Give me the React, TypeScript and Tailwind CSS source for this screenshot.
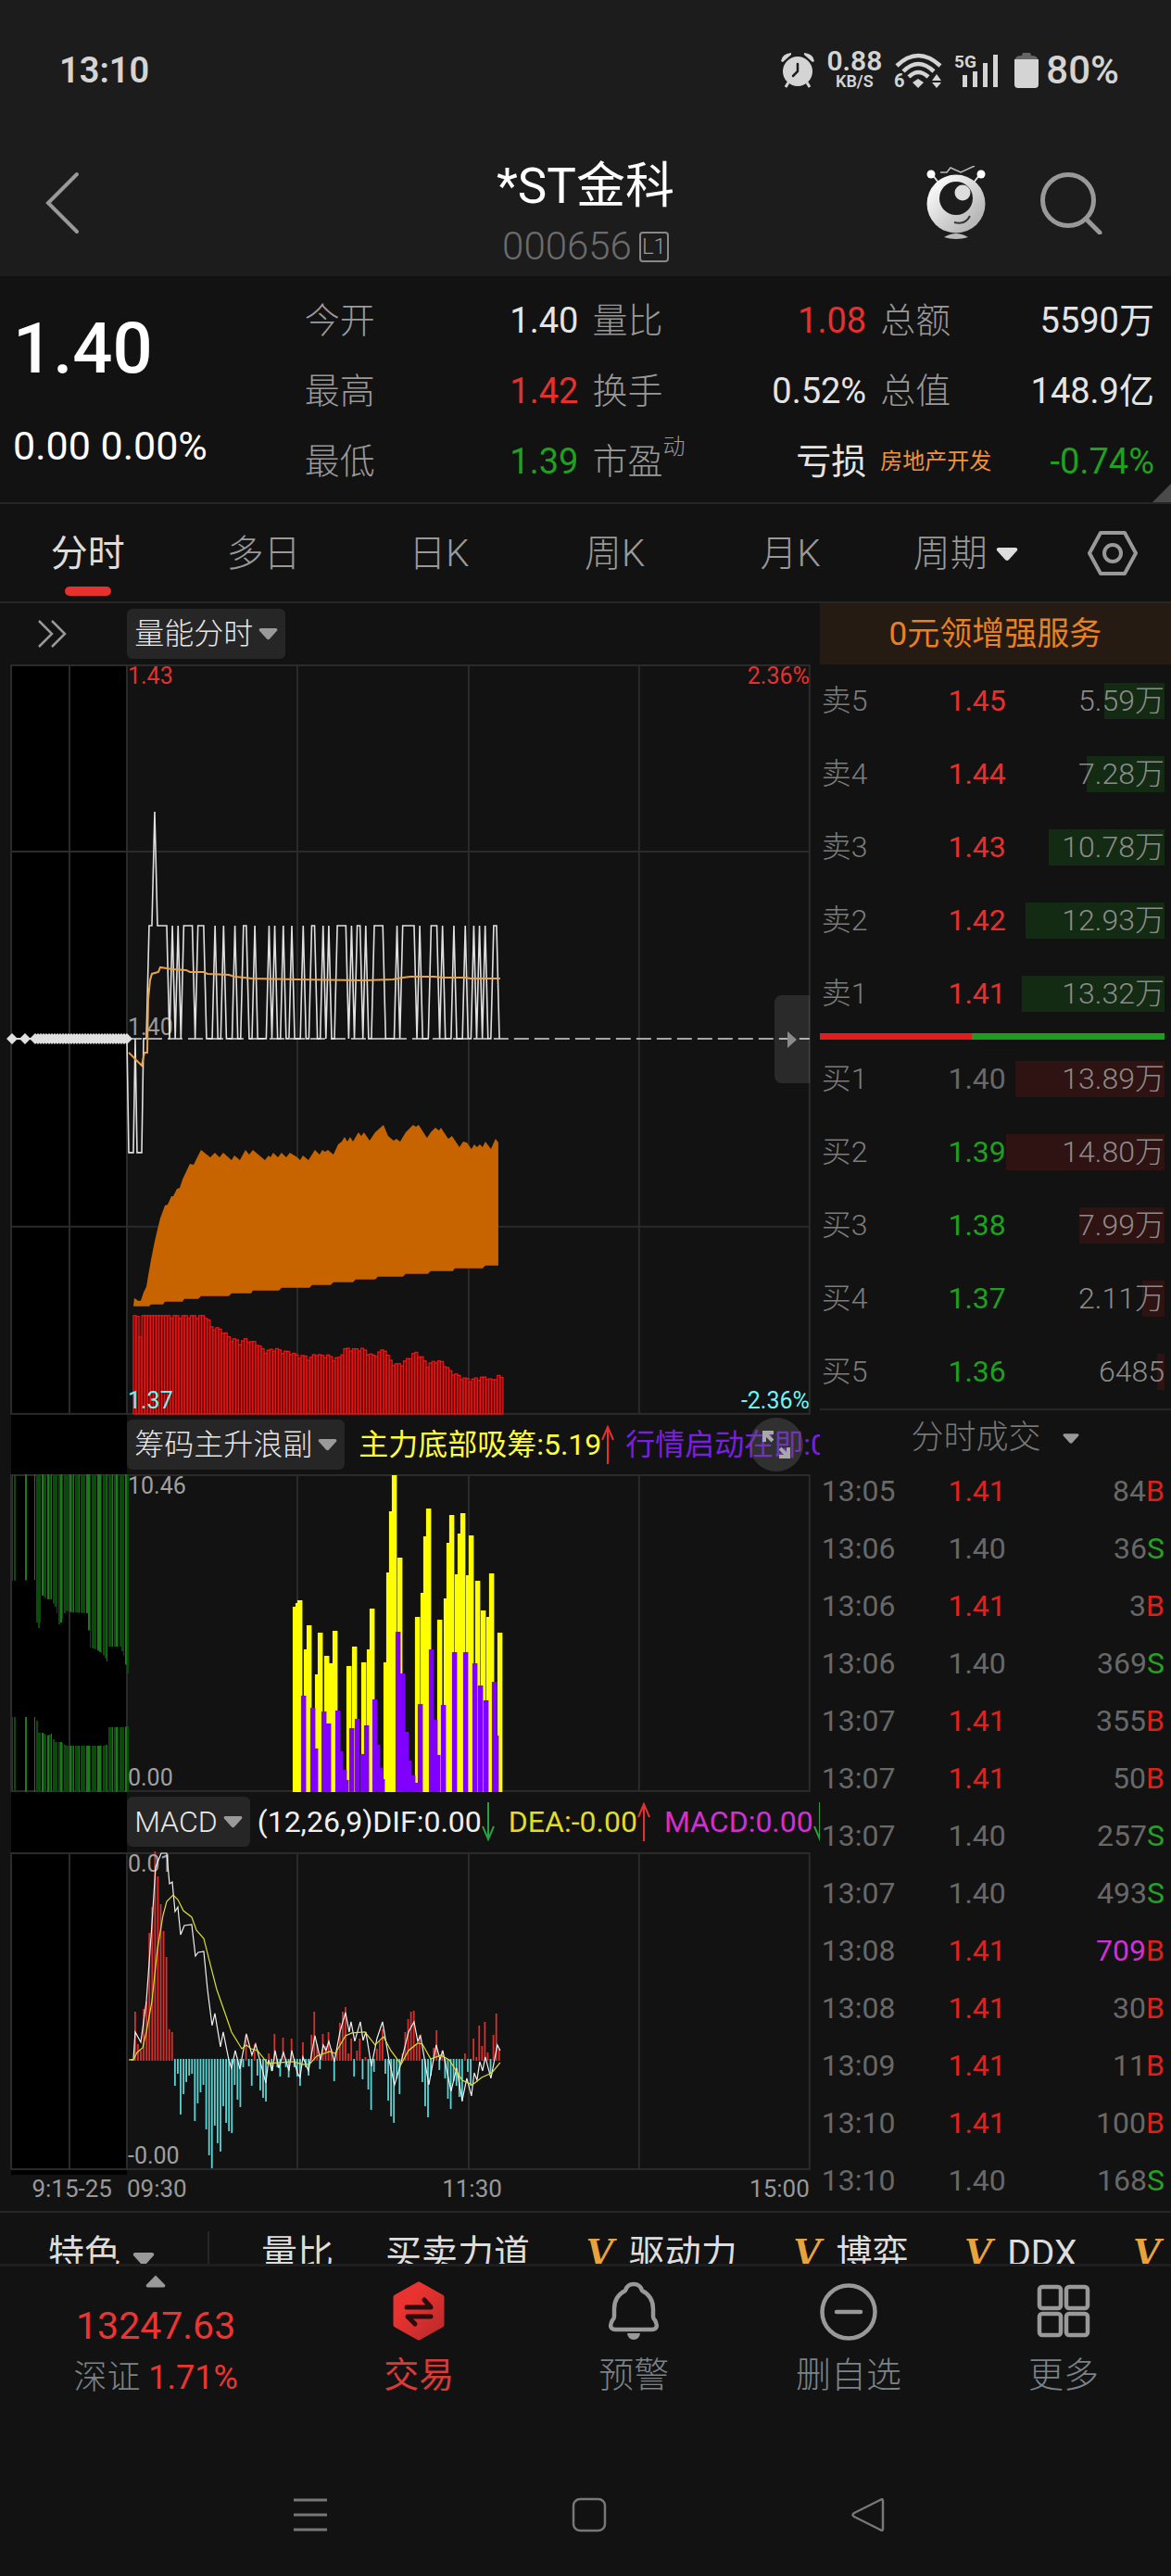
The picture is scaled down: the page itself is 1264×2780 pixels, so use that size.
import React from 'react'
import clsx from 'clsx'

type Tone = 'red' | 'green' | 'gray' | 'white'

const toneClass: Record<Tone, string> = {
  red: 'text-[#e5302d]',
  green: 'text-[#1fa01f]',
  gray: 'text-[#686868]',
  white: 'text-[#e4e4e4]',
}

/* ---------- quote data ---------- */

const stats: { label: string; value: string; tone: Tone; sup?: string; sector?: boolean }[] = [
  { label: '今开', value: '1.40', tone: 'white' },
  { label: '量比', value: '1.08', tone: 'red' },
  { label: '总额', value: '5590万', tone: 'white' },
  { label: '最高', value: '1.42', tone: 'red' },
  { label: '换手', value: '0.52%', tone: 'white' },
  { label: '总值', value: '148.9亿', tone: 'white' },
  { label: '最低', value: '1.39', tone: 'green' },
  { label: '市盈', value: '亏损', tone: 'white', sup: '动' },
  { label: '房地产开发', value: '-0.74%', tone: 'green', sector: true },
]

const tabs = ['分时', '多日', '日K', '周K', '月K']

type Order = { label: string; price: string; volume: string; tone: Tone; amount: number }

const sells: Order[] = [
  { label: '卖5', price: '1.45', volume: '5.59万', tone: 'red', amount: 5.59 },
  { label: '卖4', price: '1.44', volume: '7.28万', tone: 'red', amount: 7.28 },
  { label: '卖3', price: '1.43', volume: '10.78万', tone: 'red', amount: 10.78 },
  { label: '卖2', price: '1.42', volume: '12.93万', tone: 'red', amount: 12.93 },
  { label: '卖1', price: '1.41', volume: '13.32万', tone: 'red', amount: 13.32 },
]

const buys: Order[] = [
  { label: '买1', price: '1.40', volume: '13.89万', tone: 'gray', amount: 13.89 },
  { label: '买2', price: '1.39', volume: '14.80万', tone: 'green', amount: 14.8 },
  { label: '买3', price: '1.38', volume: '7.99万', tone: 'green', amount: 7.99 },
  { label: '买4', price: '1.37', volume: '2.11万', tone: 'green', amount: 2.11 },
  { label: '买5', price: '1.36', volume: '6485', tone: 'green', amount: 0.65 },
]

const trades: [string, string, string, 'B' | 'S'][] = [
  ['13:05', '1.41', '84', 'B'],
  ['13:06', '1.40', '36', 'S'],
  ['13:06', '1.41', '3', 'B'],
  ['13:06', '1.40', '369', 'S'],
  ['13:07', '1.41', '355', 'B'],
  ['13:07', '1.41', '50', 'B'],
  ['13:07', '1.40', '257', 'S'],
  ['13:07', '1.40', '493', 'S'],
  ['13:08', '1.41', '709', 'B'],
  ['13:08', '1.41', '30', 'B'],
  ['13:09', '1.41', '11', 'B'],
  ['13:10', '1.41', '100', 'B'],
  ['13:10', '1.40', '168', 'S'],
]

/* ---------- chart data ---------- */

const LEFT = 137
const MINUTE = 3.07

// minutes during which the price sits one tick above the previous close
const upperTicks: [number, number][] = [
  [16, 16], [18, 18], [20, 23], [25, 27], [31, 31], [34, 34], [38, 38], [41, 42], [45, 45], [50, 50],
  [52, 52], [55, 55], [58, 58], [62, 62], [65, 66], [69, 69], [71, 71], [74, 77], [79, 79], [81, 82],
  [84, 84], [87, 90], [95, 95], [97, 101], [103, 103], [107, 109], [111, 111], [115, 115], [119, 119],
  [122, 122], [124, 124], [126, 126], [129, 130],
]

const priceLine =
  '137,404 139,527 144,527 146,404 148,527 153,527 155,404 158,404 161,282 164,282 167,159 170,282 180,282 183,404 ' +
  upperTicks
    .map(([from, to]) => {
      const x = (m: number) => LEFT + m * MINUTE
      return `${x(from - 1)},404 ${x(from)},282 ${x(to)},282 ${x(to + 1)},404`
    })
    .join(' ')

const averageLine =
  '139,419 153,433 156,419 159,419 160,362 162,341 164,334 171,332 173,327 180,328 186,329 201,330 205,332 220,332 224,334 247,335 253,337 272,339 320,340 393,341 424,340 435,338 443,337 469,337 477,338 502,338 508,339 540,339'

const energyArea =
  '144,693 145,684 149,687 152,687 155,678 158,672 160,660 163,643 167,623 170,610 173,598 178,584 181,583 185,574 187,574 191,566 194,565 197,556 205,539 209,540 217,524 227,532 232,527 237,532 241,527 250,535 253,530 259,535 265,524 269,529 273,524 286,535 290,530 292,532 295,527 300,532 304,527 309,532 313,527 321,532 324,535 327,530 333,535 340,524 345,529 348,524 351,526 354,524 360,529 365,518 369,515 372,510 375,515 378,510 381,515 387,505 390,509 393,505 399,514 405,505 414,497 419,509 425,514 428,512 432,515 438,505 446,497 449,499 452,497 461,511 465,505 470,500 474,503 476,500 484,512 488,509 496,521 500,515 504,516 509,523 512,518 515,521 518,518 521,521 524,515 530,523 535,512 538,516 ' +
  '538,649 524,649 521,652 491,652 489,655 465,655 462,658 438,658 435,661 408,661 405,664 384,664 381,667 360,667 357,670 337,670 334,673 304,673 301,676 273,676 271,679 250,679 247,682 217,682 214,685 199,685 197,688 178,688 176,691 163,691 161,693'

const volumeTops: [number, number][] = [
  [144, 703], [147, 703], [148, 715], [150, 726], [152, 726], [153, 703], [222, 703], [224, 708], [226, 715],
  [233, 716], [241, 720], [247, 728], [253, 728], [258, 732], [265, 727], [269, 731], [275, 731], [281, 738],
  [286, 741], [296, 738], [303, 741], [313, 742], [320, 746], [327, 746], [333, 749], [340, 743], [345, 746],
  [352, 745], [359, 749], [365, 748], [370, 739], [375, 738], [382, 739], [389, 738], [394, 741], [401, 746],
  [407, 743], [414, 738], [419, 750], [425, 755], [432, 755], [438, 750], [447, 742], [453, 746], [460, 756],
  [469, 751], [477, 753], [484, 762], [491, 766], [499, 770], [508, 772], [513, 770], [525, 769], [530, 773],
  [536, 767], [542, 771],
]

const mainForce: [number, number][] = [
  [316, 200], [319, 204], [321, 207], [328, 154], [331, 180], [340, 127], [343, 172], [350, 147], [355, 139],
  [359, 174], [374, 136], [380, 157], [390, 140], [396, 154], [399, 198], [414, 140], [417, 237], [420, 303],
  [423, 342], [429, 253], [448, 189], [454, 215], [457, 276], [460, 306], [472, 186], [479, 209], [482, 269],
  [485, 299], [491, 235], [494, 279], [497, 301], [503, 234], [506, 277], [513, 228], [519, 196], [525, 189],
  [528, 236], [537, 172],
]

const startSignal: [number, number][] = [
  [325, 104], [335, 91], [338, 47], [347, 87], [352, 74], [362, 88], [365, 44], [369, 24], [371, 13], [377, 69],
  [383, 79], [389, 41], [393, 72], [402, 100], [405, 51], [408, 26], [410, 14], [427, 173], [432, 128],
  [436, 65], [439, 34], [443, 18], [446, 10], [451, 95], [463, 154], [467, 78], [470, 40], [476, 94],
  [488, 151], [500, 151], [510, 139], [516, 115], [522, 99], [531, 119], [533, 61],
]

// pre-market chips: [x, end of the upper bar, start of the lower bar]
const preMarket: [number, number, number][] = [
  [13, 115, 262], [38, 114, 262], [39, 160, 266], [40, 169, 279], [43, 160, 279], [45, 131, 279], [50, 135, 282],
  [55, 135, 280], [58, 142, 289], [60, 144, 289], [63, 162, 289], [66, 159, 289], [70, 147, 293], [76, 149, 293],
  [94, 150, 293], [96, 187, 293], [103, 189, 293], [110, 194, 293], [115, 202, 292], [117, 186, 273],
  [129, 186, 273], [133, 196, 273], [137, 215, 272],
]

const macd = [
  52, 17, 10, 55, 63, 137, 165, 225, 198, 168, 139, 111, 33, 30, -28, -15, -59, -37, -24, -17, -15, -66, -47, -35,
  -27, -75, -103, -117, -71, -90, -99, -50, -68, -77, -79, -27, -43, -51, -8, 27, -7, -28, 17, -17, -33, -41, -45,
  7, -12, 28, -8, -18, 24, -8, -19, 23, -8, -18, -28, 19, -8, -17, 27, 52, 17, -10, 28, 15, 30, 12, -23, 10, 40,
  52, 57, 7, 23, -18, 10, 23, -21, 3, -32, -54, -13, 12, 20, 33, -15, -44, -61, -68, -20, -37, 7, 30, 44, 52, 53,
  17, 27, -24, -50, -62, -17, 13, 32, -11, 10, -20, -42, -53, -23, -28, -40, -45, 7, -13, -28, 23, 3, 37, 15, 41,
  8, -15, 27, 50, 12,
]

const difLine =
  '141,224 144,224 146,194 152,205 158,161 164,78 168,16 174,1 180,1 183,34 186,32 189,64 192,59 195,89 199,79 207,78 211,112 214,108 220,107 224,148 229,187 232,174 238,210 241,194 247,224 250,233 254,214 259,234 266,196 272,219 276,207 287,249 290,224 294,236 297,214 301,233 306,216 312,236 315,214 321,238 324,243 327,221 333,236 340,198 346,224 349,208 352,214 355,204 361,226 367,194 373,173 377,194 379,183 383,204 389,183 392,203 395,194 401,231 407,201 413,183 420,224 426,251 432,231 441,194 447,183 451,204 454,198 463,251 471,208 475,224 478,214 487,258 493,233 499,268 504,244 509,263 512,238 515,246 518,226 521,236 524,221 530,244 537,208 540,214'

const deaLine =
  '139,224 144,224 148,216 154,211 158,194 164,161 170,104 176,68 180,53 187,46 192,51 198,63 207,70 212,84 220,93 227,121 234,148 241,168 250,194 261,212 266,208 271,212 278,214 289,228 316,226 327,229 334,229 342,220 356,215 362,217 373,198 380,195 394,194 405,208 414,199 422,214 433,229 441,214 451,206 456,207 465,223 476,219 485,224 499,246 510,251 520,243 531,238 540,227'

const interpolate = (points: number[][], x: number, col = 1) => {
  for (let i = 1; i < points.length; i++) {
    if (x <= points[i][0]) {
      const a = points[i - 1]
      const b = points[i]
      return a[col] + ((b[col] - a[col]) * (x - a[0])) / (b[0] - a[0])
    }
  }
  return points[points.length - 1][col]
}

/* ---------- small pieces ---------- */

function Caret({ className, up = false }: { className?: string; up?: boolean }) {
  return (
    <svg viewBox="0 0 24 14" className={clsx('shrink-0', className)} fill="currentColor" aria-hidden="true">
      <path d={up ? 'M12 0 L23 11 Q24 14 21 14 L3 14 Q0 14 1 11 Z' : 'M3 0 L21 0 Q24 0 23 3 L14 13 Q12 15 10 13 L1 3 Q0 0 3 0 Z'} />
    </svg>
  )
}

function Trend({ up = false }: { up?: boolean }) {
  return (
    <svg
      viewBox="0 0 14 42"
      className={clsx('h-[42px] w-[14px] shrink-0', up ? 'text-[#e5302d]' : 'text-[#25a045]')}
      fill="none"
      stroke="currentColor"
      strokeWidth="2"
      aria-hidden="true"
    >
      <path d={up ? 'M7 42V2M1 16L7 2L13 16' : 'M7 0V40M1 26L7 40L13 26'} />
    </svg>
  )
}

function IndicatorButton({ children }: { children: React.ReactNode }) {
  return (
    <button className="flex h-[54px] shrink-0 items-center gap-[6px] rounded-md bg-[#262626] px-2 text-[32px] font-light text-[#e8e8e8]">
      {children}
      <Caret className="h-[14px] w-[21px] text-[#9a9a9a]" />
    </button>
  )
}

function GridLines({ height, rows = [] }: { height: number; rows?: number[] }) {
  return (
    <g stroke="#2b2b2b" strokeWidth="2" fill="none">
      <rect x="12" y="1" width="862" height={height - 2} />
      {[75, 137, 321, 506, 690].map((x) => (
        <line key={x} x1={x} x2={x} y1="0" y2={height} />
      ))}
      {rows.map((y) => (
        <line key={y} x1="12" x2="874" y1={y} y2={y} />
      ))}
    </g>
  )
}

/* ---------- charts ---------- */

function PriceChart() {
  const volumes = Array.from({ length: 130 }, (_, i) => 144 + i * MINUTE)
  const diamonds = [13, 27, ...Array.from({ length: 34 }, (_, i) => 38 + i * 3)]

  return (
    <svg viewBox="0 0 885 810" className="block h-auto w-full overflow-visible text-[25px]" role="img" aria-label="量能分时">
      <rect x="12" y="0" width="125" height="810" fill="#000" />
      <GridLines height={810} rows={[202, 607]} />
      {volumes.map((x, i) => {
        const top = interpolate(volumeTops, x) + (i % 3 === 1 && x > 180 ? 3 : 0)
        return <rect key={i} x={x} y={top} width="3" height={809 - top} fill="#6d0000" stroke="#e81818" strokeWidth="1.3" />
      })}
      <polygon points={energyArea} fill="#c86400" />
      <line x1="137" x2="874" y1="404" y2="404" stroke="#d8d8d8" strokeWidth="1.5" strokeDasharray="16 6" />
      <line x1="8" x2="137" y1="404" y2="404" stroke="#e0e0e0" strokeWidth="2" />
      {diamonds.map((x) => (
        <path key={x} d={`M${x - 6} 404L${x} 398L${x + 6} 404L${x} 410Z`} fill="#e0e0e0" />
      ))}
      <text x="138" y="400" fill="#9a9a9a">1.40</text>
      <polyline points={priceLine} fill="none" stroke="#e0e0e0" strokeWidth="1.6" />
      <polyline points={averageLine} fill="none" stroke="#e8a24a" strokeWidth="2" />
      <text x="138" y="21" fill="#e5302d">1.43</text>
      <text x="874" y="21" fill="#e5302d" textAnchor="end">2.36%</text>
      <text x="138" y="803" fill="#6ff5f5">1.37</text>
      <text x="874" y="803" fill="#6ff5f5" textAnchor="end">-2.36%</text>
    </svg>
  )
}

function ForceChart() {
  const chips = [13, 15, 27, 37, ...Array.from({ length: 50 }, (_, i) => 39 + i * 2)]

  return (
    <svg viewBox="0 0 885 343" className="block h-auto w-full overflow-visible text-[25px]" role="img" aria-label="筹码主升浪副">
      <rect x="12" y="0" width="125" height="343" fill="#000" />
      <GridLines height={343} />
      {chips.map((x, i) => {
        const top = interpolate(preMarket, x, 1)
        const bottom = interpolate(preMarket, x, 2)
        const fill = i % 5 === 2 || i % 7 === 3 ? '#1c7a1c' : '#064f06'
        return (
          <g key={x} fill={fill}>
            <rect x={x} y="0" width={i % 3 === 0 ? 1 : 2} height={top} />
            <rect x={x} y={bottom} width={i % 3 === 0 ? 1 : 2} height={343 - bottom} />
          </g>
        )
      })}
      {mainForce.map(([x, h]) => (
        <rect key={x} x={x} y={343 - h} width="5.5" height={h} fill="#ffff00" />
      ))}
      {startSignal.map(([x, h]) => (
        <rect key={x} x={x} y={343 - h} width="5.5" height={h} fill="#7f00ff" />
      ))}
      <text x="138" y="21" fill="#a0a0a0">10.46</text>
      <text x="138" y="336" fill="#a0a0a0">0.00</text>
    </svg>
  )
}

function MacdChart() {
  return (
    <svg viewBox="0 0 885 348" className="block h-auto w-full overflow-visible text-[25px]" role="img" aria-label="MACD">
      <rect x="12" y="0" width="125" height="348" fill="#000" />
      <GridLines height={343} />
      {macd.map((v, i) => (
        <rect
          key={i}
          x={145 + i * MINUTE}
          y={v > 0 ? 224 - v : 223}
          width="1.8"
          height={Math.abs(v) + 1}
          fill={v > 0 ? '#d8302c' : '#5ad5d5'}
        />
      ))}
      <text x="138" y="21" fill="#a0a0a0">0.01</text>
      <text x="138" y="336" fill="#a0a0a0">-0.00</text>
      <polyline points={difLine} fill="none" stroke="#f0f0f0" strokeWidth="1.2" />
      <polyline points={deaLine} fill="none" stroke="#dede30" strokeWidth="1.2" />
    </svg>
  )
}

/* ---------- sections ---------- */

function StatusBar() {
  return (
    <div className="flex h-[152px] items-center justify-between pl-16 pr-14 text-[#d4d4d4]">
      <span className="text-[38px] font-semibold">13:10</span>
      <div className="flex items-center gap-[13px]">
        <svg viewBox="0 0 36 38" className="h-[38px] w-[36px]" fill="currentColor" aria-hidden="true">
          <circle cx="18" cy="20" r="16" />
          <path d="M0 9Q1 1 11 0L11 2L2 10ZM36 9Q35 1 25 0L25 2L34 10Z" />
          <path d="M8 32L5 37M28 32L31 37" stroke="currentColor" strokeWidth="3" />
          <path d="M18 12V20L13 25" stroke="#1c1c1c" strokeWidth="2.5" fill="none" strokeLinecap="round" />
        </svg>
        <div className="flex flex-col items-center font-semibold">
          <span className="text-[30px] leading-[24px]">0.88</span>
          <span className="text-[18px] leading-[20px]">KB/S</span>
        </div>
        <svg viewBox="0 0 52 38" className="h-[38px] w-[52px] overflow-visible" fill="none" stroke="currentColor" strokeWidth="4.5" aria-hidden="true">
          <path d="M3 14Q26 -8 50 14M10 20Q26 4 43 20M16 26Q26 16 37 26" />
          <path d="M26 28L32 32L26 38L20 32Z" fill="currentColor" stroke="none" />
          <path d="M41 30L46 23L51 30ZM41 32L46 38L51 32Z" fill="currentColor" stroke="none" />
          <text x="0" y="37" fontSize="20" fontWeight="700" fill="currentColor" stroke="none">6</text>
        </svg>
        <svg viewBox="0 0 48 38" className="h-[38px] w-[48px] overflow-visible" fill="currentColor" aria-hidden="true">
          <text x="0" y="16" fontSize="19" fontWeight="700">5G</text>
          <path d="M9 24h5v13h-5zM20 20h5v17h-5zM31 11h5v26h-5zM42 2h5v35h-5z" />
        </svg>
        <div className="flex items-center gap-2 pl-1">
          <svg viewBox="0 0 26 38" className="h-[38px] w-[26px]" aria-hidden="true">
            <path d="M1 7Q1 3 8 3L9 0H17L18 3Q25 3 25 7Z" fill="#666" />
            <path d="M0 7H26V34Q26 38 22 38H4Q0 38 0 34Z" fill="currentColor" />
          </svg>
          <span className="text-[42px] font-medium leading-[50px]">80%</span>
        </div>
      </div>
    </div>
  )
}

function TitleBar() {
  return (
    <div className="grid h-[146px] grid-cols-[1fr_auto_1fr]">
      <div className="flex items-center pb-3 pl-12">
        <button aria-label="返回">
          <svg viewBox="0 0 38 68" className="h-[68px] w-[38px]" fill="none" stroke="#999" strokeWidth="4" strokeLinecap="round" aria-hidden="true">
            <path d="M35 3L4 34L35 65" />
          </svg>
        </button>
      </div>
      <div className="pt-4 text-center">
        <h1 className="text-[53px] font-normal leading-[66px] text-white">*ST金科</h1>
        <div className="mt-1 flex items-center justify-center gap-2 text-[42px] font-light leading-[56px] text-[#6c6c6c]">
          000656
          <span className="w-8 rounded-sm border-2 border-[#888] text-center text-[24px] leading-[29px] text-[#999]">L1</span>
        </div>
      </div>
      <div className="flex items-center justify-end gap-[59px] pb-3 pr-[73px]">
        <button aria-label="智能助手">
          <svg viewBox="0 0 64 80" className="h-[80px] w-[64px]" aria-hidden="true">
            <defs>
              <linearGradient id="bot" x1="0" y1="0" x2="1" y2="1">
                <stop offset="0.2" stopColor="#f4f4f4" />
                <stop offset="0.8" stopColor="#b8b8b8" />
              </linearGradient>
            </defs>
            <path d="M6 9L13 18M58 9L51 18" stroke="#ddd" strokeWidth="2" />
            <circle cx="5" cy="9" r="4.5" fill="#fff" />
            <circle cx="59" cy="9" r="4.5" fill="#fff" />
            <path d="M15 7H22L26 2L37 7L52 0" fill="none" stroke="#bbb" strokeWidth="1.5" />
            <circle cx="32" cy="41" r="31.5" fill="url(#bot)" />
            <circle cx="32" cy="35" r="18" fill="#1c1c1c" />
            <circle cx="39" cy="29" r="8.5" fill="#ddd" />
            <path d="M30 61Q42 64 47 54" fill="none" stroke="#333" strokeWidth="2" />
            <path d="M19 77Q32 69 45 77Q32 81 19 77Z" fill="#bbb" />
          </svg>
        </button>
        <button aria-label="搜索">
          <svg viewBox="0 0 68 68" className="h-[68px] w-[68px]" fill="none" stroke="#999" strokeWidth="5" aria-hidden="true">
            <circle cx="30" cy="31" r="27.5" />
            <path d="M49 51L64 66" strokeLinecap="round" />
          </svg>
        </button>
      </div>
    </div>
  )
}

function QuotePanel() {
  return (
    <section className="relative flex h-[246px] border-b-2 border-[#262626] pt-[10px]">
      <div className="w-[26%] shrink-0 pl-[14px] text-white">
        <div className="mt-[26px] text-[76px] font-medium leading-[84px]">1.40</div>
        <div className="mt-[38px] text-[43px] leading-[50px]">0.00 0.00%</div>
      </div>
      <dl className="grid flex-1 grid-cols-3 grid-rows-[76px_76px_76px] gap-x-[15px] pr-[18px]">
        {stats.map((s) => (
          <div key={s.label} className="flex items-center justify-between">
            {s.sector ? (
              <dt className="text-[24px] text-[#f0923c]">{s.label}</dt>
            ) : (
              <dt className="relative text-[38px] font-light text-[#999]">
                {s.label}
                {s.sup && <span className="absolute left-full top-0 text-[24px] leading-[24px]">{s.sup}</span>}
              </dt>
            )}
            <dd className={clsx('text-[38px]', toneClass[s.tone])}>{s.value}</dd>
          </div>
        ))}
      </dl>
      <svg viewBox="0 0 20 20" className="absolute bottom-0 right-0 h-5 w-5" aria-hidden="true">
        <path d="M20 0V20H0Z" fill="#4a4a4a" />
      </svg>
    </section>
  )
}

function PeriodTabs() {
  return (
    <nav className="grid h-[107px] grid-cols-[3fr_3fr_3fr_3fr_3fr_3fr_2fr] border-b-2 border-[#262626] text-[40px] text-[#999]">
      {tabs.map((tab, i) => (
        <button key={tab} className={clsx('relative pt-[3px]', i === 0 ? 'font-normal text-[#ddd]' : 'font-light')}>
          {tab}
          {i === 0 && <span className="absolute bottom-[6px] left-1/2 h-[10px] w-[50px] -translate-x-1/2 rounded-full bg-[#e8302c]" />}
        </button>
      ))}
      <button className="flex items-center justify-center gap-2 pt-[3px] font-light">
        周期
        <Caret className="h-[14px] w-[26px] text-[#ddd]" />
      </button>
      <button className="flex items-center justify-center" aria-label="设置">
        <svg viewBox="0 0 54 50" className="h-[50px] w-[54px]" fill="none" stroke="#999" strokeWidth="4" strokeLinejoin="round" aria-hidden="true">
          <path d="M14 3H40L52 25L40 47H14L2 25Z" />
          <circle cx="27" cy="25" r="9" />
        </svg>
      </button>
    </nav>
  )
}

function Charts() {
  return (
    <section className="min-w-0 flex-1">
      <div className="flex h-[66px] items-center">
        <div className="w-[15.5%] shrink-0 pl-10">
          <button className="flex" aria-label="展开">
            <svg viewBox="0 0 32 32" className="h-8 w-8" fill="none" stroke="#999" strokeWidth="2.5" aria-hidden="true">
              <path d="M2 2L16 16L2 30M16 2L30 16L16 30" />
            </svg>
          </button>
        </div>
        <IndicatorButton>量能分时</IndicatorButton>
      </div>
      <div className="relative">
        <PriceChart />
        <button
          className="absolute right-[11px] top-[357px] flex h-[95px] w-[38px] items-center justify-center rounded-l-lg bg-white/10"
          aria-label="收起盘口"
        >
          <svg viewBox="0 0 10 18" className="h-[18px] w-[10px]" fill="#8a8a8a" aria-hidden="true">
            <path d="M0 0L10 9L0 18Z" />
          </svg>
        </button>
      </div>

      <div className="relative flex h-[64px] items-center overflow-hidden whitespace-nowrap">
        <div className="h-full w-[15.5%] shrink-0 pl-3">
          <div className="h-full bg-black" />
        </div>
        <IndicatorButton>筹码主升浪副</IndicatorButton>
        <span className="ml-[15px] text-[32px] text-[#ffff3a]">主力底部吸筹:5.19</span>
        <Trend up />
        <span className="ml-3 text-[32px] text-[#7a1fe0]">行情启动在即:0.00</span>
        <button
          className="absolute right-[18px] top-[3px] flex h-[58px] w-[58px] items-center justify-center rounded-full bg-[#606060]/40"
          aria-label="放大"
        >
          <svg viewBox="0 0 32 32" className="h-8 w-8" fill="none" stroke="#a8a8a8" strokeWidth="4" aria-hidden="true">
            <path d="M13 3H3V13M3 3L12 12M19 29H29V19M29 29L20 20" />
          </svg>
        </button>
      </div>
      <ForceChart />

      <div className="flex h-[65px] items-center overflow-hidden whitespace-nowrap">
        <div className="h-full w-[15.5%] shrink-0 pl-3">
          <div className="h-full bg-black" />
        </div>
        <IndicatorButton>MACD</IndicatorButton>
        <span className="ml-2 text-[32px] text-[#f0f0f0]">(12,26,9)DIF:0.00</span>
        <Trend />
        <span className="ml-[15px] text-[32px] text-[#e0dc28]">DEA:-0.00</span>
        <Trend up />
        <span className="ml-[15px] text-[32px] text-[#d42fd4]">MACD:0.00</span>
        <Trend />
      </div>
      <MacdChart />
      <div className="grid h-[39px] grid-cols-[137fr_369fr_368fr_11fr] text-[26px] leading-[30px] text-[#999]">
        <span className="pr-4 text-right">9:15-25</span>
        <span className="flex justify-between">
          09:30
          <span className="-mr-9">11:30</span>
        </span>
        <span className="text-right">15:00</span>
      </div>
    </section>
  )
}

function OrderTable({ orders, side }: { orders: Order[]; side: 'sell' | 'buy' }) {
  return (
    <table className="w-full table-fixed text-[32px]">
      <tbody>
        {orders.map((o) => (
          <tr key={o.label} className="h-[79px]">
            <th scope="row" className="w-[27%] pb-[2px] pl-[2px] text-left font-light text-[#7c7c7c]">{o.label}</th>
            <td className={clsx('w-[27%] pb-[2px] text-right', toneClass[o.tone])}>{o.price}</td>
            <td className="relative w-[46%] pb-[2px] text-right font-light text-[#8c8c8c]">
              <div
                className={clsx('absolute right-0 top-5 h-[39px]', side === 'sell' ? 'bg-[#132a13]' : 'bg-[#2f1212]')}
                style={{ width: `${(o.amount / 14.8) * 100}%` }}
              />
              <span className="relative">{o.volume}</span>
            </td>
          </tr>
        ))}
      </tbody>
    </table>
  )
}

function OrderBook() {
  return (
    <aside className="w-[30%] shrink-0">
      <button className="block h-[66px] w-full bg-[#261b12] pt-[2px] text-[35px] text-[#e88024]">0元领增强服务</button>
      <div className="pr-[7px]">
        <OrderTable orders={sells} side="sell" />
        <div className="my-[3px] flex h-[7px]">
          <div className="w-[44%] bg-[#e21c1c]" />
          <div className="flex-1 bg-[#1f9c1f]" />
        </div>
        <OrderTable orders={buys} side="buy" />
      </div>
      <button className="flex h-[58px] w-full items-center justify-center gap-6 border-t-2 border-[#262626] pt-1 text-[35px] font-light text-[#777]">
        分时成交
        <Caret className="h-[11px] w-[18px] text-[#999]" />
      </button>
      <div className="pr-[7px]">
        <table className="w-full table-fixed text-[32px] text-[#686868]">
          <tbody>
            {trades.map(([time, price, volume, side], i) => (
              <tr key={i} className="h-[62px]">
                <td className="w-[27%] pl-[2px]">{time}</td>
                <td className={clsx('w-[27%] text-right', price === '1.41' ? 'text-[#e5201c]' : 'text-[#686868]')}>{price}</td>
                <td className="w-[46%] text-right">
                  <span className={clsx(volume === '709' && 'text-[#d42fd4]')}>{volume}</span>
                  <span className={side === 'B' ? 'text-[#d8221e]' : 'text-[#25a025]'}>{side}</span>
                </td>
              </tr>
            ))}
          </tbody>
        </table>
      </div>
    </aside>
  )
}

function FeatureStrip() {
  const vip = ['驱动力', '博弈', 'DDX', '']
  return (
    <section className="flex h-[57px] gap-[56px] overflow-hidden whitespace-nowrap border-t-2 border-[#262626] pl-[52px] text-[39px] leading-[88px] text-[#ddd]">
      <button className="flex shrink-0 gap-3">
        特色
        <Caret className="mt-[43px] h-[14px] w-[26px] text-[#999]" />
      </button>
      <div className="mt-5 h-10 w-0 shrink-0 border-l-2 border-[#262626]" />
      <a href="#liangbi" className="shrink-0">量比</a>
      <a href="#lidao" className="shrink-0">买卖力道</a>
      {vip.map((name) => (
        <a key={name} href="#vip" className="flex shrink-0 gap-4 pl-1">
          <span className="[font-family:'Liberation_Serif',serif] text-[46px] font-bold italic text-[#e8a33d]">V</span>
          {name}
        </a>
      ))}
    </section>
  )
}

function BottomBar() {
  const label = 'text-[38px] font-light leading-[50px] text-[#7b8388]'
  return (
    <footer>
      <div className="grid h-[161px] grid-cols-[29fr_20fr_20fr_20fr_20fr] border-t-[3px] border-[#1e1e1e]">
        <button className="flex flex-col items-center pt-[9px] text-[#ee3431]">
          <Caret up className="h-[14px] w-[22px] text-[#999]" />
          <span className="mt-[16px] text-[41px] leading-[50px]">13247.63</span>
          <span className="mt-[6px] text-[36px] leading-[50px]">
            <span className="font-light text-[#7b8388]">深证</span> 1.71%
          </span>
        </button>
        <button className="flex flex-col items-center gap-3 pt-4">
          <svg viewBox="0 0 58 64" className="h-[64px] w-[58px]" aria-hidden="true">
            <defs>
              <linearGradient id="hex" x1="0" y1="0" x2="1" y2="1">
                <stop offset="0.3" stopColor="#ea3330" />
                <stop offset="1" stopColor="#b82a2a" />
              </linearGradient>
            </defs>
            <path d="M29 3L54 17V47L29 61L4 47V17Z" fill="url(#hex)" stroke="url(#hex)" strokeWidth="5" strokeLinejoin="round" />
            <path d="M16 28H42L35 20M42 38H17L25 46" fill="none" stroke="#2a0c0c" strokeWidth="5" strokeLinecap="round" strokeLinejoin="round" />
          </svg>
          <span className="text-[38px] leading-[50px] text-[#d93a36]">交易</span>
        </button>
        <button className="flex flex-col items-center gap-3 pt-4">
          <svg viewBox="0 0 54 64" className="h-[64px] w-[54px]" fill="none" stroke="#999" strokeWidth="4.5" strokeLinejoin="round" aria-hidden="true">
            <path d="M27 3Q34 3 36 10Q48 16 48 30V38Q48 40 50 42Q55 52 46 52H8Q-1 52 4 42Q6 40 6 38V30Q6 16 18 10Q20 3 27 3Z" />
            <path d="M20 56H34Q33 63 27 63Q21 63 20 56Z" fill="#999" stroke="none" />
          </svg>
          <span className={label}>预警</span>
        </button>
        <button className="flex flex-col items-center gap-3 pt-4">
          <svg viewBox="0 0 64 64" className="h-[64px] w-[64px]" fill="none" stroke="#999" strokeWidth="4.5" strokeLinecap="round" aria-hidden="true">
            <circle cx="32" cy="33" r="28.5" />
            <path d="M19 33H45" />
          </svg>
          <span className={label}>删自选</span>
        </button>
        <button className="flex flex-col items-center gap-3 pt-4">
          <svg viewBox="0 0 64 64" className="h-[64px] w-[64px]" fill="none" stroke="#999" strokeWidth="4.5" aria-hidden="true">
            <rect x="6" y="6" width="23" height="23" rx="3" />
            <rect x="35" y="6" width="23" height="23" rx="3" />
            <rect x="6" y="35" width="23" height="23" rx="3" />
            <rect x="35" y="35" width="23" height="23" rx="3" />
          </svg>
          <span className={label}>更多</span>
        </button>
      </div>
      <div className="flex h-[174px] items-center justify-center gap-[263px] pl-2 pt-[46px]">
        <button aria-label="最近任务">
          <svg viewBox="0 0 38 38" className="h-[38px] w-[38px]" stroke="#777" strokeWidth="3" aria-hidden="true">
            <path d="M1 3H37M1 19H37M1 35H37" />
          </svg>
        </button>
        <button aria-label="主页">
          <svg viewBox="0 0 38 38" className="h-[38px] w-[38px]" fill="none" stroke="#777" strokeWidth="2.5" aria-hidden="true">
            <rect x="2" y="2" width="34" height="34" rx="7" />
          </svg>
        </button>
        <button aria-label="后退">
          <svg viewBox="0 0 38 38" className="h-[38px] w-[38px]" fill="none" stroke="#777" strokeWidth="2.5" strokeLinejoin="round" aria-hidden="true">
            <path d="M32 3Q35 1 35 4V34Q35 37 32 35L4 21Q1 19 4 17Z" />
          </svg>
        </button>
      </div>
    </footer>
  )
}

export default function App() {
  return (
    <main className="min-h-screen bg-[#121212] [font-family:Roboto,'Noto_Sans_CJK_SC',sans-serif]">
      <header className="bg-[#1c1c1c]">
        <StatusBar />
        <TitleBar />
      </header>
      <QuotePanel />
      <PeriodTabs />
      <div className="flex">
        <Charts />
        <OrderBook />
      </div>
      <FeatureStrip />
      <BottomBar />
    </main>
  )
}
